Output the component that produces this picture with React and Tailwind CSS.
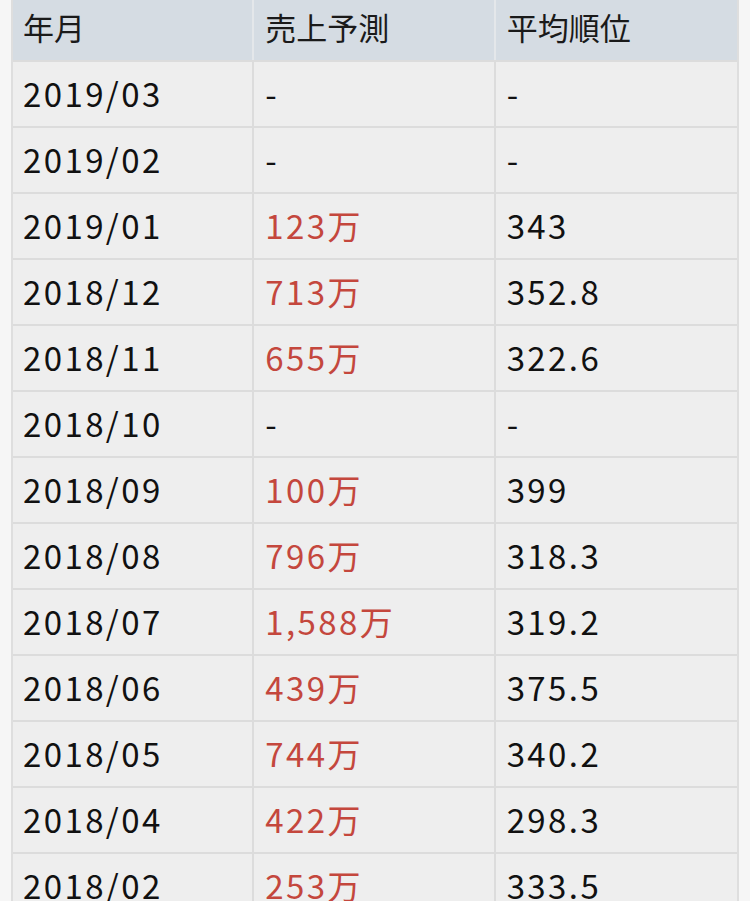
const rows = [
  ['2019/03', '-', '-'],
  ['2019/02', '-', '-'],
  ['2019/01', '123万', '343'],
  ['2018/12', '713万', '352.8'],
  ['2018/11', '655万', '322.6'],
  ['2018/10', '-', '-'],
  ['2018/09', '100万', '399'],
  ['2018/08', '796万', '318.3'],
  ['2018/07', '1,588万', '319.2'],
  ['2018/06', '439万', '375.5'],
  ['2018/05', '744万', '340.2'],
  ['2018/04', '422万', '298.3'],
  ['2018/02', '253万', '333.5'],
];

const font = { fontFamily: '"Noto Sans CJK JP", "Noto Sans", sans-serif' };

export default function App() {
  return (
    <div className="h-[901px] w-[750px] overflow-hidden bg-[#f6f6f6]" style={font}>
      <div className="ml-[11px] w-[728px] border-x-2 border-[#dedede]">
        <div className="grid h-[60px] grid-cols-3 bg-[#d5dce3] text-[31px] text-[#1a1a1a]">
          <div className="flex items-center border-r-2 border-[#e4e7ea] pb-[6px] pl-[10px]">年月</div>
          <div className="flex items-center border-r-2 border-[#e4e7ea] pb-[6px] pl-[11px]">売上予測</div>
          <div className="flex items-center pb-[6px] pl-[11px]">平均順位</div>
        </div>
        {rows.map(([month, sales, rank]) => (
          <div key={month} className="grid h-[66px] grid-cols-3 border-t-2 border-[#dcdcdc] bg-[#eeeeee] text-[33px] tracking-[2.4px]">
            <div className="flex items-center border-r-2 border-[#dcdcdc] pl-[10px] text-[#111]">{month}</div>
            <div className={`flex items-center border-r-2 border-[#dcdcdc] pl-[11px] ${sales === '-' ? 'text-[#111]' : 'text-[#c4473d]'}`}>{sales}</div>
            <div className="flex items-center pl-[11px] text-[#111]">{rank}</div>
          </div>
        ))}
      </div>
    </div>
  );
}
